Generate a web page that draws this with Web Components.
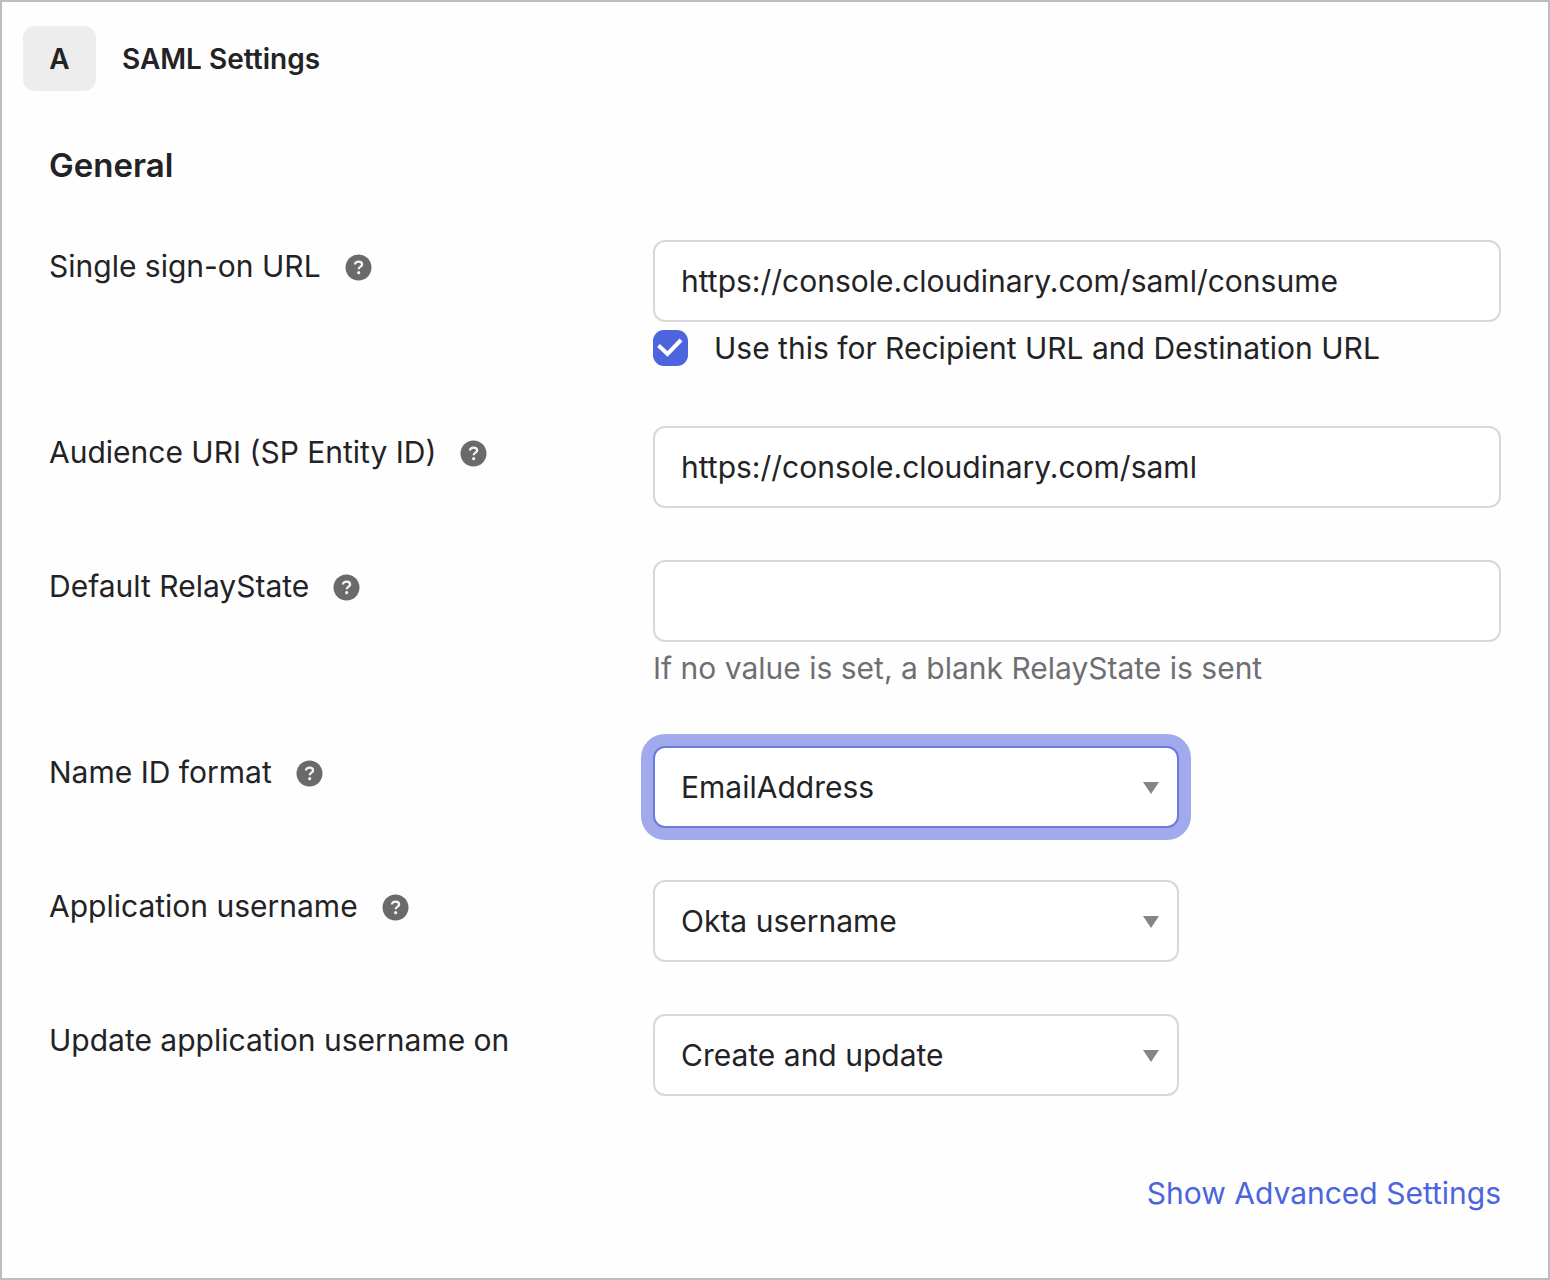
<!DOCTYPE html>
<html lang="en">
<head>
<meta charset="utf-8">
<meta name="viewport" content="width=device-width, initial-scale=1">
<title>SAML Settings</title>
<style>
  html, body { margin: 0; background: #fefefe; }
  body { font-family: Inter, "Liberation Sans", sans-serif; color: #232326; }
</style>
</head>
<body>
<saml-settings></saml-settings>

<template id="step-header-template">
  <style>
    :host { display: flex; align-items: center; gap: 26px; padding: 24px 21px 0; }
    .step {
      display: flex; align-items: center; justify-content: center;
      width: 73px; height: 65px; border-radius: 12px; background: #ededed;
      font-size: 28px; font-weight: 600;
    }
  </style>
  <span class="step"><slot name="step"></slot></span>
  <slot></slot>
</template>

<template id="form-row-template">
  <style>
    :host { display: grid; grid-template-columns: 151fr 212fr; align-items: start; }
    .label { display: flex; align-items: center; gap: 24px; line-height: 52px; }
    .control { display: flex; flex-direction: column; min-width: 0; }
  </style>
  <div class="label"><slot name="label"></slot><slot name="help"></slot></div>
  <div class="control"><slot></slot></div>
</template>

<template id="help-tip-template">
  <style>
    :host { display: block; padding-top: 2px; }
    button { display: block; padding: 0; border: 0; border-radius: 50%; background: none; cursor: pointer; }
    svg { display: block; width: 27px; height: 27px; }
  </style>
  <button type="button" aria-label="Help">
    <svg viewBox="0 0 27 27" fill="none" aria-hidden="true">
      <circle cx="13.5" cy="13.5" r="13" fill="#6a6a6a"/>
      <path d="M10 10.6C10 8.6 11.5 7.6 13.6 7.6C15.7 7.6 17.1 8.7 17.1 10.4C17.1 12.7 13.7 12.5 13.7 15.2" stroke="#f4f4f4" stroke-width="2.3"/>
      <circle cx="13.7" cy="18.7" r="1.6" fill="#f4f4f4"/>
    </svg>
  </button>
</template>

<template id="select-box-template">
  <style>
    :host { display: grid; width: 62%; align-items: center; }
    ::slotted(select), svg { grid-area: 1 / 1; }
    svg { justify-self: end; width: 16px; height: 12px; margin-right: 20px; padding-top: 2px; pointer-events: none; z-index: 1; }
  </style>
  <slot></slot>
  <svg viewBox="0 0 16 12" aria-hidden="true"><path d="M0 0H16L8 12Z" fill="#858585"/></svg>
</template>

<template id="check-box-template">
  <style>
    :host { display: flex; align-items: center; gap: 26px; line-height: 52px; }
    .box { display: grid; align-items: center; }
    ::slotted(input), svg { grid-area: 1 / 1; }
    svg { width: 35px; height: 36px; pointer-events: none; z-index: 1; }
  </style>
  <span class="box">
    <slot name="input"></slot>
    <svg viewBox="0 0 35 36" fill="none" aria-hidden="true"><path d="M5.5 15.5L14.5 24L28 10" stroke="#fff" stroke-width="4"/></svg>
  </span>
  <slot></slot>
</template>

<template id="saml-settings-template">
  <style>
    :host { display: block; box-sizing: border-box; min-height: 100vh; border: 2px solid #bdbdbd; background: #fefefe; font-size: 30px; }
    h1, h2 { margin: 0; font-weight: 600; }
    h1 { font-size: 28px; }
    h2 { font-size: 33px; line-height: 48px; }
    form { display: flex; flex-direction: column; padding: 50px 47px; }
    .rows { display: flex; flex-direction: column; gap: 52px; padding-top: 51px; }
    input[type="text"], select {
      box-sizing: border-box; width: 100%; height: 82px; margin: 0; padding: 0 26px;
      border: 2px solid #d8d8db; border-radius: 12px; background: #fff;
      font: inherit; color: inherit; appearance: none; outline: none;
    }
    select.active, input[type="text"]:focus, select:focus {
      border-color: #6c7bdc; box-shadow: 0 0 0 12px #a0aaec;
    }
    input[type="checkbox"] {
      appearance: none; width: 35px; height: 36px; margin: 0; border-radius: 11px; background: #4c64dd;
    }
    .hint { margin: 0; line-height: 52px; color: #6e6e73; }
    a { align-self: flex-end; margin-top: 71px; line-height: 52px; color: #4c64dd; text-decoration: none; }
  </style>
  <step-header><span slot="step">A</span><h1>SAML Settings</h1></step-header>
  <form>
    <h2>General</h2>
    <div class="rows">
      <form-row>
        <label slot="label" for="sso">Single sign-on URL</label><help-tip slot="help"></help-tip>
        <input type="text" id="sso" value="https://console.cloudinary.com/saml/consume">
        <check-box><input slot="input" type="checkbox" id="recipient" checked><label for="recipient">Use this for Recipient URL and Destination URL</label></check-box>
      </form-row>
      <form-row>
        <label slot="label" for="audience">Audience URI (SP Entity ID)</label><help-tip slot="help"></help-tip>
        <input type="text" id="audience" value="https://console.cloudinary.com/saml">
      </form-row>
      <form-row>
        <label slot="label" for="relay">Default RelayState</label><help-tip slot="help"></help-tip>
        <input type="text" id="relay" aria-describedby="relay-hint">
        <p class="hint" id="relay-hint">If no value is set, a blank RelayState is sent</p>
      </form-row>
      <form-row>
        <label slot="label" for="format">Name ID format</label><help-tip slot="help"></help-tip>
        <select-box><select id="format" class="active"><option>EmailAddress</option></select></select-box>
      </form-row>
      <form-row>
        <label slot="label" for="username">Application username</label><help-tip slot="help"></help-tip>
        <select-box><select id="username"><option>Okta username</option></select></select-box>
      </form-row>
      <form-row>
        <label slot="label" for="update">Update application username on</label>
        <select-box><select id="update"><option>Create and update</option></select></select-box>
      </form-row>
    </div>
    <a href="#advanced">Show Advanced Settings</a>
  </form>
</template>

<script>
  class TemplateElement extends HTMLElement {
    constructor() {
      super();
      const template = document.getElementById(this.localName + "-template");
      this.attachShadow({ mode: "open" }).append(template.content.cloneNode(true));
    }
  }
  class StepHeader extends TemplateElement {}
  class FormRow extends TemplateElement {}
  class HelpTip extends TemplateElement {}
  class SelectBox extends TemplateElement {}
  class CheckBox extends TemplateElement {}
  class SamlSettings extends TemplateElement {}
  customElements.define("step-header", StepHeader);
  customElements.define("form-row", FormRow);
  customElements.define("help-tip", HelpTip);
  customElements.define("select-box", SelectBox);
  customElements.define("check-box", CheckBox);
  customElements.define("saml-settings", SamlSettings);
</script>
</body>
</html>
